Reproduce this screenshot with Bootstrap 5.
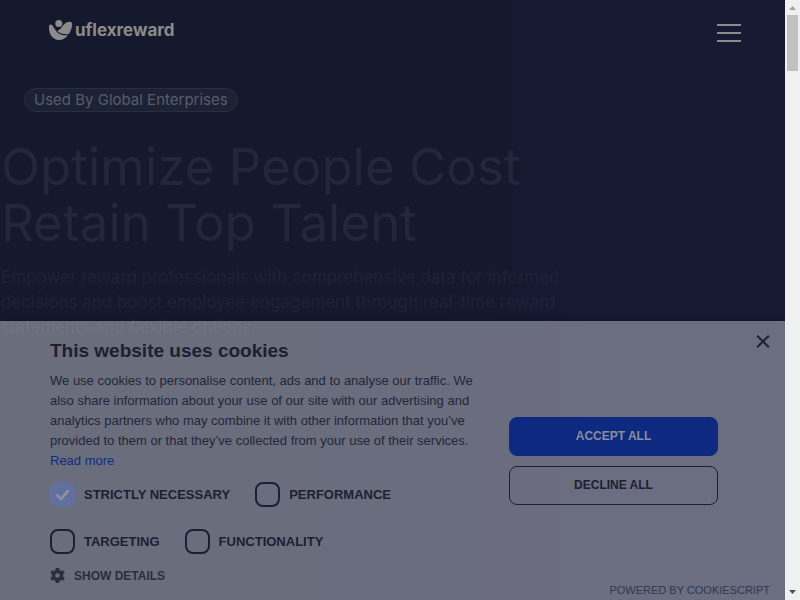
<!DOCTYPE html>
<html lang="en">
<head>
<meta charset="utf-8">
<meta name="viewport" content="width=device-width, initial-scale=1">
<title>uflexreward</title>
<link href="https://cdn.jsdelivr.net/npm/bootstrap@5.3.0/dist/css/bootstrap.min.css" rel="stylesheet">
<style>
body { background: #14192e; font-family: Inter, "Liberation Sans", sans-serif; }
.page { background: linear-gradient(90deg, #14192d 0%, #14192e 50%, #151932 75%, #151932 100%); min-width: 0; }
.site-header { padding: 19px 44px 0 48px; }
.brand-name { font-weight: 700; font-size: 17px; line-height: 22px; color: #8b8b8b; }
.menu-bars { width: 24px; gap: 6px; margin-top: 5px; }
.menu-bars span { height: 2px; background: #8b8b8b; }
.hero { padding: 45px 0 0 1px; color: #222739; }
.pill { margin-left: 23px; padding: 0 9px; border: 1px solid #292d41; background: #1d2136; color: #585c68; font-size: 15px; line-height: 22px; }
.headline { font-size: 51px; line-height: 56px; margin: 27px 0 14px; font-weight: 400; }
.hero-text { font-size: 17px; line-height: 25px; color: #1f2336; }
.cookie { background: rgba(248, 248, 255, .38); box-shadow: 0 0 8px rgba(0, 0, 0, .3); font-family: "Liberation Sans", Arial, sans-serif; color: #1d2033; padding: 17px 15px 3px 50px; }
.cookie-title { font-size: 19px; line-height: 26px; margin-bottom: 7px; }
.cookie-text { font-size: 13px; line-height: 20px; margin-bottom: 11px; color: #232639; }
.cookie-text a { color: #0d2c83; }
.choices { row-gap: 22px; column-gap: 25px; margin-bottom: 14px; }
.choice { font-size: 13px; line-height: 25px; gap: 9px; }
.choice .form-check-input { width: 25px; height: 25px; margin: 0; border: 2px solid #1d2033; border-radius: 8px; background-color: transparent; }
.tick-box { position: relative; }
.choice .form-check-input:checked { background: #62709f; border-color: #62709f; }
.tick-box svg { position: absolute; inset: 0; pointer-events: none; }
.details-btn { font-size: 12px; line-height: 14px; color: #2b2e41; gap: 9px; }
.info { flex: 0 1 424px; }
.actions { flex: 0 1 209px; gap: 10px; margin: 79px 52px 0 auto; }
.actions .btn { font-size: 12px; line-height: 19px; padding: 9px; border-radius: 8px; font-weight: 700; }
.accept { background: #0d2a80; border-color: #0d2a80; color: #8a8d9d; }
.decline { border-color: #1d2033; color: #1d2033; }
.close-btn { top: 14px; right: 15px; line-height: 0; }
.powered { font-size: 11px; line-height: 14px; color: #34374a; }
.scroller { width: 15px; background: #f0f0f0; padding: 0 2px; }
.scroller svg { flex: none; margin: 0 auto; }
.thumb { height: 56px; background: #c1c1c1; }
</style>
<script src="https://cdn.jsdelivr.net/npm/bootstrap@5.3.0/dist/js/bootstrap.bundle.min.js"></script>
</head>
<body>
<div class="d-flex vh-100 overflow-hidden">
  <div class="page position-relative flex-grow-1 overflow-hidden">
    <header class="site-header d-flex justify-content-between align-items-start">
      <a href="#" class="d-flex text-decoration-none" aria-label="uflexreward home">
        <svg width="27" height="23" viewBox="0 0 27 23" fill="#8b8b8b" aria-hidden="true">
          <circle cx="10.8" cy="4.4" r="3.5"/>
          <path d="M1 7.8C1.1 5.4 3 4.8 4.5 6.6C6.4 9 7.2 12 10 14C12.8 16 16 16.6 19.8 16.2C17.4 19.8 13.5 21.5 9.6 20.9C3.8 19.9.8 14.4 1 7.8Z"/>
          <path d="M9.2 12C13.4 10.6 14.4 5.6 18.4 3.6C21.7 2 24.6 2.6 24.2 5.8C23.7 9.4 22.6 12.8 20.5 15.2C16.5 15.6 12 14.8 9.2 12Z"/>
        </svg>
        <span class="brand-name">uflexreward</span>
      </a>
      <button type="button" class="btn p-0 border-0 rounded-0" aria-label="Open menu">
        <span class="menu-bars d-flex flex-column"><span></span><span></span><span></span></span>
      </button>
    </header>
    <main class="hero">
      <span class="pill d-inline-block rounded-pill">Used By Global Enterprises</span>
      <h1 class="headline">Optimize People Cost<br>Retain Top Talent</h1>
      <p class="hero-text mb-0">Empower reward professionals with comprehensive data for informed<br>decisions and boost employee engagement through real-time reward<br>statements and flexible options.</p>
    </main>
    <section class="cookie position-absolute bottom-0 start-0 end-0" role="dialog" aria-labelledby="cookie-title">
      <button type="button" class="close-btn btn p-0 border-0 position-absolute" aria-label="Close">
        <svg width="14" height="13" viewBox="0 0 14 13" stroke="#1d2033" stroke-width="2" fill="none"><path d="M1.2.7L12.8 12.3M12.8.7L1.2 12.3"/></svg>
      </button>
      <div class="d-flex">
        <div class="info">
          <h2 class="cookie-title fw-bold" id="cookie-title">This website uses cookies</h2>
          <p class="cookie-text">We use cookies to personalise content, ads and to analyse our traffic. We<br>also share information about your use of our site with our advertising and<br>analytics partners who may combine it with other information that you’ve<br>provided to them or that they’ve collected from your use of their services.<br><a href="#" class="text-decoration-none">Read more</a></p>
          <div class="choices d-flex flex-wrap">
            <label class="choice d-flex fw-bold" for="c1"><span class="tick-box d-flex"><input class="form-check-input" type="checkbox" id="c1" checked><svg width="25" height="25" viewBox="0 0 25 25" fill="none" stroke="#8d91a2" stroke-width="2.6"><path d="M6.5 12.5L11 17L18.5 8.3"/></svg></span><span>STRICTLY NECESSARY</span></label>
            <label class="choice d-flex fw-bold" for="c2"><input class="form-check-input" type="checkbox" id="c2"><span>PERFORMANCE</span></label>
            <label class="choice d-flex fw-bold" for="c3"><input class="form-check-input" type="checkbox" id="c3"><span>TARGETING</span></label>
            <label class="choice d-flex fw-bold" for="c4"><input class="form-check-input" type="checkbox" id="c4"><span>FUNCTIONALITY</span></label>
          </div>
          <button type="button" class="details-btn btn p-0 border-0 d-flex align-items-center fw-bold">
            <svg width="15" height="15" viewBox="0 0 16 16" aria-hidden="true"><path fill="#2b2e41" fill-rule="evenodd" d="M6.2 0h3.6l.5 2.3 1.3.8 2.3-.8 1.8 3-1.8 1.7v2l1.8 1.7-1.8 3-2.3-.8-1.3.8-.5 2.3H6.2l-.5-2.3-1.3-.8-2.3.8-1.8-3L2.1 9V7L.3 5.3l1.8-3 2.3.8 1.3-.8zM8 5.6a2.4 2.4 0 1 0 0 4.8 2.4 2.4 0 0 0 0-4.8z"/></svg>
            <span>SHOW DETAILS</span>
          </button>
        </div>
        <div class="actions d-flex flex-column">
          <button type="button" class="btn accept">ACCEPT ALL</button>
          <button type="button" class="btn decline">DECLINE ALL</button>
        </div>
      </div>
      <div class="text-end"><a href="#" class="powered d-block text-decoration-none">POWERED BY COOKIESCRIPT</a></div>
    </section>
  </div>
  <div class="scroller d-flex flex-column flex-shrink-0" aria-hidden="true">
    <svg width="11" height="15" viewBox="0 0 11 15"><path fill="#a3a3a3" d="M2 10L5.5 6L9 10Z"/></svg>
    <div class="thumb"></div>
    <svg class="mt-auto" width="11" height="15" viewBox="0 0 11 15"><path fill="#505050" d="M2 5L5.5 9L9 5Z"/></svg>
  </div>
</div>
</body>
</html>
